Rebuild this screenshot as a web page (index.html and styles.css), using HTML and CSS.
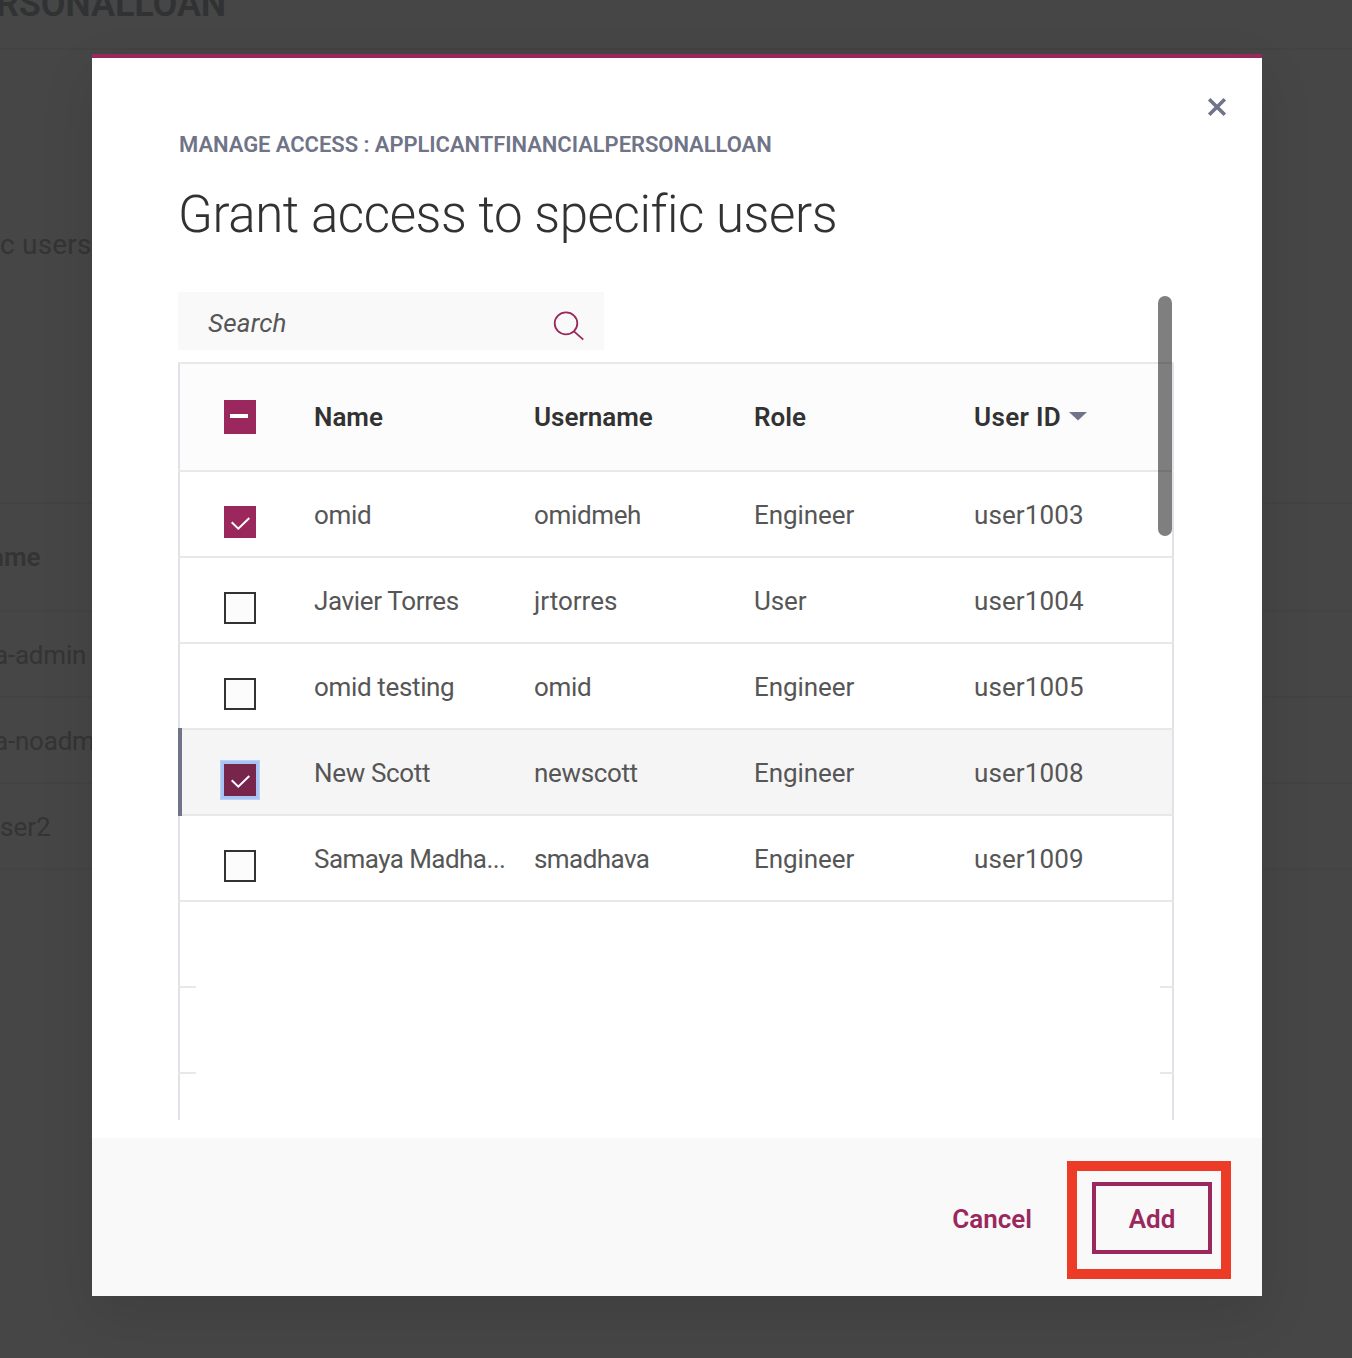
FILE: index.html
```html
<!DOCTYPE html>
<html lang="en">
<head>
<meta charset="utf-8">
<title>Manage access</title>
<link rel="stylesheet" href="styles.css">
</head>
<body>
<div class="page">
  <header class="page-head">RSONALLOAN</header>
  <p class="page-option">c users</p>
  <div class="page-table">
    <div class="page-row page-row-head"><span class="bg-name">ame</span></div>
    <div class="page-row"><span class="bg-admin">a-admin</span></div>
    <div class="page-row"><span class="bg-noadmin">a-noadm</span></div>
    <div class="page-row"><span class="bg-user">ser2</span></div>
  </div>
</div>
<div class="overlay">
  <section class="modal">
    <div class="modal-body">
      <svg class="close" width="20" height="20" viewBox="0 0 20 20"><path d="M2.2 2.2l15.6 15.6M17.8 2.2l-15.6 15.6"/></svg>
      <div class="label">MANAGE ACCESS : APPLICANTFINANCIALPERSONALLOAN</div>
      <h1 class="title">Grant access to specific users</h1>
      <div class="scroll">
        <div class="search">
          <span class="search-text">Search</span>
          <svg class="search-icon" width="32" height="30" viewBox="0 0 32 30"><ellipse cx="13" cy="12.3" rx="11.3" ry="11"/><path d="M21 20.3l9.3 8.4"/></svg>
        </div>
        <div class="table">
          <div class="row head"><div class="cells">
            <span class="check on mixed"><i class="dash"></i></span>
            <span class="h-name">Name</span><span class="h-username">Username</span><span class="h-role">Role</span>
            <span class="sort"><span class="h-id">User ID</span><svg width="18" height="9" viewBox="0 0 18 9"><path d="M0 0h18L9 8.5z"/></svg></span>
          </div></div>
          <div class="row"><div class="cells">
            <span class="check on"><svg width="32" height="32" viewBox="0 0 32 32"><path d="M7.7 16.3l6.6 6.4 11-10.7"/></svg></span>
            <span class="tight">omid</span><span class="tight">omidmeh</span><span class="role">Engineer</span><span class="id">user1003</span>
          </div></div>
          <div class="row"><div class="cells">
            <span class="check"></span>
            <span class="tight">Javier Torres</span><span>jrtorres</span><span class="role">User</span><span class="id">user1004</span>
          </div></div>
          <div class="row"><div class="cells">
            <span class="check"></span>
            <span class="tight">omid testing</span><span class="tight">omid</span><span class="role">Engineer</span><span class="id">user1005</span>
          </div></div>
          <div class="row selected"><div class="cells">
            <span class="check on focus"><svg width="32" height="32" viewBox="0 0 32 32"><path d="M7.7 16.3l6.6 6.4 11-10.7"/></svg></span>
            <span class="tight">New Scott</span><span class="tight">newscott</span><span class="role">Engineer</span><span class="id">user1008</span>
          </div></div>
          <div class="row"><div class="cells">
            <span class="check"></span>
            <span class="tighter">Samaya Madha...</span><span class="tighter">smadhava</span><span class="role">Engineer</span><span class="id">user1009</span>
          </div></div>
          <div class="row empty"><div class="cells"></div></div>
          <div class="row empty"><div class="cells"></div></div>
          <div class="row last"><div class="cells"></div></div>
        </div>
        <div class="scrollbar"></div>
      </div>
    </div>
    <footer class="modal-foot">
      <span class="cancel">Cancel</span>
      <div class="highlight"><span class="add">Add</span></div>
    </footer>
  </section>
</div>
</body>
</html>
```
FILE: styles.css
```css
* { box-sizing: border-box; }

body {
  margin: 0;
  height: 1358px;
  position: relative;
  overflow: hidden;
  background: #464646;
  font-family: Roboto, "Noto Sans", sans-serif;
  font-size: 26px;
  line-height: 32px;
  color: #565656;
}

/* Dimmed page behind the dialog */
.page { color: #343434; white-space: nowrap; }
.page-head {
  height: 50px;
  padding-left: 0;
  text-indent: -4px;
  border-bottom: 2px solid #434343;
  font-size: 36px;
  font-weight: 600;
  line-height: 8px;
  letter-spacing: -0.1px;
  color: #303233;
}
.page-option { margin: 178px 0 0; font-size: 28px; line-height: 34px; height: 32px; letter-spacing: 0.2px; }
.page-table { margin-top: 242px; border-top: 2px solid #434343; }
.page-row { display: flex; align-items: center; height: 86px; padding-top: 2px; border-bottom: 2px solid #434343; }
.page-row-head { height: 108px; font-weight: 600; padding-top: 0; }
.bg-name { margin-left: -10px; }
.bg-admin, .bg-noadmin { margin-left: -6px; letter-spacing: -0.2px; }

/* Dialog */
.overlay { position: absolute; inset: 0; padding: 54px 90px 62px 92px; }
.modal {
  height: 1242px;
  display: flex;
  flex-direction: column;
  background: #fff;
  border-top: 4px solid #9b285d;
  box-shadow: 0 20px 50px rgba(0, 0, 0, 0.1);
}
.modal-body { position: relative; flex: 1; padding: 71px 88px 0 86px; }
.close { position: absolute; left: 1115px; top: 39px; }
.close path { stroke: #6f7488; stroke-width: 3.6; fill: none; }
.label { height: 32px; padding-left: 1px; font-size: 22px; font-weight: 600; letter-spacing: -0.06px; color: #6f7488; white-space: nowrap; }
.title { margin: 22px 0 0; height: 64px; font-size: 51px; font-weight: 340; line-height: 64px; letter-spacing: -0.4px; color: #323232; white-space: nowrap; }
.scroll { position: relative; margin-top: 45px; height: 828px; overflow: hidden; }

.search {
  display: flex;
  align-items: center;
  justify-content: space-between;
  width: 426px;
  height: 58px;
  padding: 4px 19px 0 30px;
  background: #f9f9f9;
  font-style: italic;
}
.search-text { letter-spacing: 0.2px; }
.search-icon { margin-top: 6px; fill: none; stroke: #9b285d; stroke-width: 1.8; }

.table { margin-top: 12px; border-top: 2px solid #e8e8e8; }
.row { position: relative; border-bottom: 2px solid #e8e8e8; }
.cells {
  display: grid;
  grid-template-columns: 90px 220px 220px 220px 1fr;
  align-items: center;
  height: 84px;
  padding: 2px 0 0 44px;
  border: solid #dfe3e8;
  border-width: 0 2px;
  white-space: nowrap;
}
.head .cells { height: 106px; padding-top: 0; background: #fcfcfc; color: #323232; font-weight: 600; }
.tight { letter-spacing: -0.35px; }
.tighter { letter-spacing: -0.55px; }
.role { letter-spacing: -0.08px; }
.id { letter-spacing: 0.1px; }
.h-id { letter-spacing: 0.35px; }
.sort { display: flex; align-items: center; gap: 8px; }
.sort svg { fill: #6f7488; margin-top: -2px; }

.check { width: 32px; height: 32px; margin-top: 14px; border: 2px solid #323232; background: #fcfcfc; }
.check.on { border: 0; background: #9b285d; }
.check svg { display: block; fill: none; stroke: #fff; stroke-width: 2; }
.check.mixed { height: 34px; margin-top: 0; padding: 14px 0 0 6px; }
.dash { display: block; width: 18px; height: 4px; background: #fff; }
.check.focus { background: #77254b; box-shadow: 0 0 0 3px #a8c4f6, 0 0 0 4px #bdd1f6; }

.selected .cells { background: #f5f5f5; }
.selected::before { content: ""; position: absolute; left: 0; top: -2px; bottom: -2px; width: 4px; background: #6f7488; }

/* Row rules are visible only at both edges */
.empty { border-bottom: 0; padding-bottom: 2px; background: linear-gradient(90deg, #e8e8e8 18px, #fff 18px 982px, #e8e8e8 982px); }
.empty .cells { background: #fff; }
.last { border-bottom: 0; }

.scrollbar { position: absolute; left: 980px; top: 4px; width: 14px; height: 240px; border-radius: 7px; background: rgba(0, 0, 0, 0.5); }

.modal-foot {
  display: flex;
  justify-content: flex-end;
  align-items: center;
  height: 158px;
  padding: 6px 31px 0 0;
  background: #f9f9f9;
  color: #9b285d;
  font-weight: 600;
}
.cancel { margin: -2px 35px 0 0; }
.highlight { width: 164px; height: 118px; padding: 11px 9px 15px 15px; border: 10px solid #ec3b26; }
.add { display: flex; align-items: center; justify-content: center; height: 72px; padding-top: 2px; border: 4px solid #9b285d; }
```
